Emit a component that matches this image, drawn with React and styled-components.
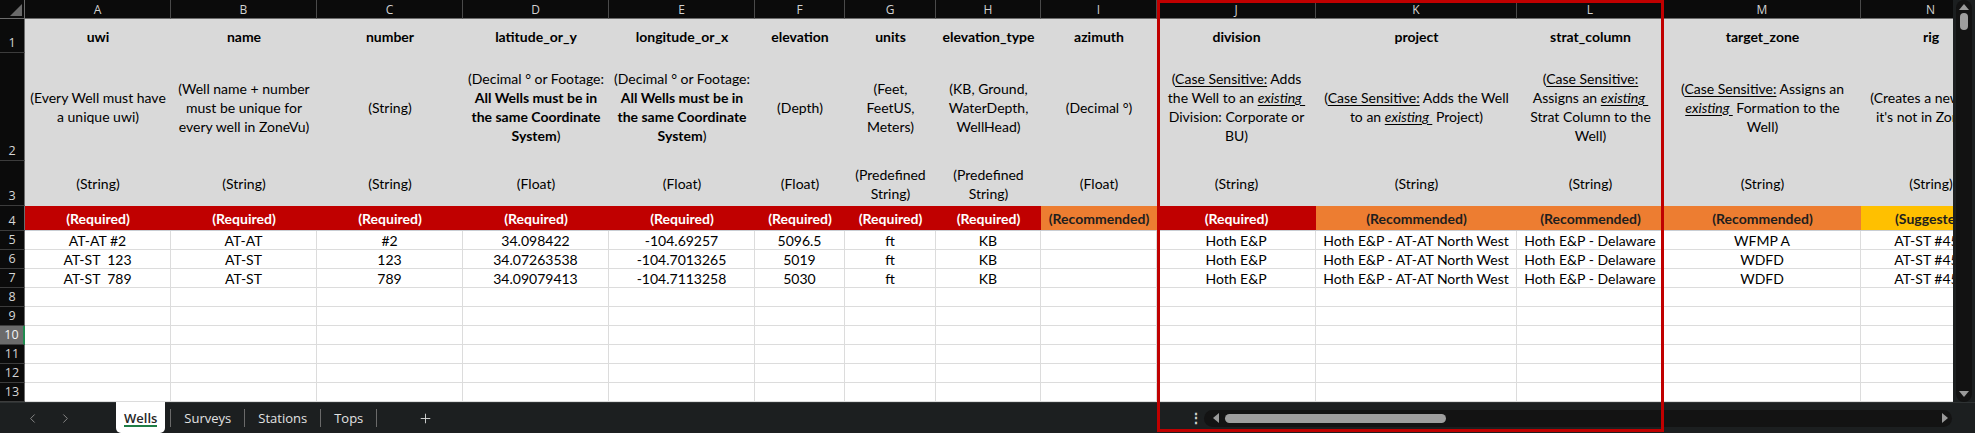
import styled, { createGlobalStyle, css } from "styled-components";
import { ChevronLeft, ChevronRight, Plus } from "lucide-react";

const GlobalStyle = createGlobalStyle`
  html, body {
    margin: 0;
    padding: 0;
    background: #1c1f20;
  }
  * {
    box-sizing: border-box;
  }
`;

const CELL_FONT = `"Lato", "Liberation Sans", sans-serif`;
const UI_FONT = `"Open Sans", "Noto Sans", sans-serif`;

const ROW_HEAD = 25;

const Window = styled.div`
  position: relative;
  width: 1975px;
  height: 433px;
  display: flex;
  flex-direction: column;
  overflow: hidden;
  background: #1c1f20;
`;

const Main = styled.div`
  display: flex;
  height: 402px;
`;

const Sheet = styled.div`
  flex: 1;
  overflow: hidden;
  display: grid;
  grid-template-columns: ${({ cols }) => `${ROW_HEAD}px ${cols.map(c => `${c}px`).join(" ")}`};
  grid-template-rows: 19px 34px 108px 45px 25px repeat(9, 19px);
  font-family: ${CELL_FONT};
  font-size: 14px;
  color: #000;
`;

const Corner = styled.div`
  background: #0b0b0b;
  border-right: 1px solid #6c6c6c;
  border-bottom: 1px solid #6c6c6c;
  position: relative;

  &::after {
    content: "";
    position: absolute;
    left: 10px;
    top: 4px;
    width: 12px;
    height: 12px;
    background: #6a6a6a;
    clip-path: polygon(100% 0, 100% 100%, 0 100%);
  }
`;

const ColHead = styled.div`
  display: flex;
  align-items: center;
  justify-content: center;
  background: #0b0b0b;
  color: #d2d2d2;
  font-family: ${UI_FONT};
  font-size: 12px;
  border-right: 1px solid #4a4a4a;
  border-bottom: 1px solid #6c6c6c;
`;

const RowHead = styled.div`
  display: flex;
  align-items: flex-end;
  justify-content: center;
  padding-bottom: 1px;
  background: #0b0b0b;
  color: #d6d6d6;
  font-family: ${UI_FONT};
  font-size: 12.5px;
  line-height: 17px;
  border-right: 1px solid #6c6c6c;
  border-bottom: 1px solid #3c3c3c;

  ${({ active }) =>
    active &&
    css`
      background: #6b6b6b;
      color: #f4f4f4;
      border-right: 2px solid #1e8c4e;
    `}
`;

const HeadCell = styled.div`
  display: flex;
  align-items: center;
  justify-content: center;
  text-align: center;
  white-space: pre;
  line-height: 19px;
  background: #d9d9d9;
  font-weight: ${({ bold }) => (bold ? 700 : 400)};
`;

const TAGS = {
  req: { bg: "#c00000", fg: "#ffffff", label: "(Required)" },
  rec: { bg: "#ed7d31", fg: "#1e1e1e", label: "(Recommended)" },
  sug: { bg: "#ffc000", fg: "#1e1e1e", label: "(Suggested)" },
};

const TagCell = styled.div`
  display: flex;
  align-items: center;
  justify-content: center;
  white-space: nowrap;
  font-weight: 700;
  background: ${({ kind }) => TAGS[kind].bg};
  color: ${({ kind }) => TAGS[kind].fg};
  border-bottom: 1px solid #c9ced4;
`;

const DataCell = styled.div`
  display: flex;
  align-items: center;
  justify-content: center;
  white-space: pre;
  background: #ffffff;
  border-right: 1px solid #dcdcdc;
  border-bottom: 1px solid #dcdcdc;
`;

const B = styled.b`
  font-weight: 700;
`;

const U = styled.span`
  text-decoration: underline;
  text-underline-offset: 2px;
`;

const Ex = styled.i`
  font-style: italic;
  text-decoration: underline;
  text-underline-offset: 2px;
`;

const VScroll = styled.div`
  width: 22px;
  padding: 0 3px;
  background: #1c1f20;
`;

const VTrack = styled.div`
  height: 100%;
  border-radius: 8px;
  background: #121212;
  display: flex;
  flex-direction: column;
  align-items: center;
  padding-top: 4px;
`;

const VThumb = styled.div`
  width: 8px;
  height: 17px;
  margin-top: 3px;
  border-radius: 4px;
  background: #9e9e9e;
`;

const Spacer = styled.div`
  flex: 1;
`;

const Arrow = styled.div`
  width: 0;
  height: 0;
  border: 5px solid transparent;
  ${({ dir }) =>
    ({
      up: css`
        border-bottom: 6px solid #9a9a9a;
        border-top-width: 0;
      `,
      down: css`
        border-top: 6px solid #9a9a9a;
        border-bottom-width: 0;
        margin-bottom: 5px;
      `,
      left: css`
        border-right: 6px solid #9a9a9a;
        border-left-width: 0;
      `,
      right: css`
        border-left: 6px solid #9a9a9a;
        border-right-width: 0;
      `,
    })[dir]}
`;

const BottomBar = styled.div`
  height: 31px;
  display: flex;
  align-items: stretch;
  border-top: 1px solid #2e3233;
  background: #1c1f20;
  font-family: ${UI_FONT};
  font-size: 13px;
  color: #e2e2e2;
`;

const Nav = styled.div`
  display: flex;
  align-items: center;
  gap: 18px;
  padding-left: 25px;
  width: 116px;
  color: #8c8c8c;
`;

const Tabs = styled.div`
  display: flex;
  align-items: center;
  width: 1072px;
`;

const Tab = styled.div`
  position: relative;
  display: flex;
  align-items: center;
  padding: 0 13px;
  height: 100%;

  ${({ active }) =>
    active &&
    css`
      margin-top: -1px;
      height: calc(100% + 1px);
      padding: 0 8px;
      margin-right: 5px;
      background: #ffffff;
      color: #262626;
      font-weight: 600;
      border-radius: 0 0 5px 5px;

      &::after {
        content: "";
        position: absolute;
        left: 8px;
        right: 8px;
        bottom: 6px;
        height: 2px;
        background: #1e7d45;
      }
    `}
`;

const Sep = styled.div`
  width: 1px;
  height: 18px;
  background: #6a6a6a;
`;

const AddSheet = styled.div`
  display: flex;
  align-items: center;
  margin-left: 41px;
  color: #d4d4d4;
`;

const More = styled.div`
  display: flex;
  align-items: center;
  justify-content: center;
  width: 16px;
  color: #cfcfcf;
  font-size: 14px;
  font-weight: 700;
  line-height: 1;
`;

const HTrack = styled.div`
  align-self: center;
  display: flex;
  align-items: center;
  gap: 6px;
  width: 748px;
  height: 17px;
  padding: 0 4px 0 9px;
  border-radius: 9px;
  background: #131313;
`;

const HThumb = styled.div`
  width: 221px;
  height: 9px;
  border-radius: 5px;
  background: #9e9e9e;
`;

const Focus = styled.div`
  position: absolute;
  left: 1157px;
  top: 0;
  width: 507px;
  height: 432px;
  border: 3px solid #c00000;
  pointer-events: none;
`;

const REQ = "req";
const REC = "rec";

const columns = [
  {
    id: "A",
    w: 146,
    title: "uwi",
    desc: (
      <>
        (Every Well must have
        <br />a unique uwi)
      </>
    ),
    type: "(String)",
    tag: REQ,
    rows: ["AT-AT #2", "AT-ST  123", "AT-ST  789"],
  },
  {
    id: "B",
    w: 146,
    title: "name",
    desc: (
      <>
        (Well name + number
        <br />
        must be unique for
        <br />
        every well in ZoneVu)
      </>
    ),
    type: "(String)",
    tag: REQ,
    rows: ["AT-AT", "AT-ST", "AT-ST"],
  },
  {
    id: "C",
    w: 146,
    title: "number",
    desc: "(String)",
    type: "(String)",
    tag: REQ,
    rows: ["#2", "123", "789"],
  },
  {
    id: "D",
    w: 146,
    title: "latitude_or_y",
    desc: (
      <>
        (Decimal ° or Footage:
        <br />
        <B>All Wells must be in</B>
        <br />
        <B>the same Coordinate</B>
        <br />
        <B>System</B>)
      </>
    ),
    type: "(Float)",
    tag: REQ,
    rows: ["34.098422", "34.07263538", "34.09079413"],
  },
  {
    id: "E",
    w: 146,
    title: "longitude_or_x",
    desc: (
      <>
        (Decimal ° or Footage:
        <br />
        <B>All Wells must be in</B>
        <br />
        <B>the same Coordinate</B>
        <br />
        <B>System</B>)
      </>
    ),
    type: "(Float)",
    tag: REQ,
    rows: ["-104.69257", "-104.7013265", "-104.7113258"],
  },
  {
    id: "F",
    w: 90,
    title: "elevation",
    desc: "(Depth)",
    type: "(Float)",
    tag: REQ,
    rows: ["5096.5", "5019", "5030"],
  },
  {
    id: "G",
    w: 91,
    title: "units",
    desc: (
      <>
        (Feet,
        <br />
        FeetUS,
        <br />
        Meters)
      </>
    ),
    type: (
      <>
        (Predefined
        <br />
        String)
      </>
    ),
    tag: REQ,
    rows: ["ft", "ft", "ft"],
  },
  {
    id: "H",
    w: 105,
    title: "elevation_type",
    desc: (
      <>
        (KB, Ground,
        <br />
        WaterDepth,
        <br />
        WellHead)
      </>
    ),
    type: (
      <>
        (Predefined
        <br />
        String)
      </>
    ),
    tag: REQ,
    rows: ["KB", "KB", "KB"],
  },
  {
    id: "I",
    w: 116,
    title: "azimuth",
    desc: "(Decimal °)",
    type: "(Float)",
    tag: REC,
    rows: ["", "", ""],
  },
  {
    id: "J",
    w: 159,
    title: "division",
    desc: (
      <>
        (<U>Case Sensitive:</U> Adds
        <br />
        the Well to an <Ex>existing </Ex>
        <br />
        Division: Corporate or
        <br />
        BU)
      </>
    ),
    type: "(String)",
    tag: REQ,
    rows: ["Hoth E&P", "Hoth E&P", "Hoth E&P"],
  },
  {
    id: "K",
    w: 201,
    title: "project",
    desc: (
      <>
        (<U>Case Sensitive:</U> Adds the Well
        <br />
        to an <Ex>existing </Ex>{" "}Project)
      </>
    ),
    type: "(String)",
    tag: REC,
    rows: [
      "Hoth E&P - AT-AT North West",
      "Hoth E&P - AT-AT North West",
      "Hoth E&P - AT-AT North West",
    ],
  },
  {
    id: "L",
    w: 147,
    title: "strat_column",
    desc: (
      <>
        (<U>Case Sensitive:</U>
        <br />
        Assigns an <Ex>existing </Ex>
        <br />
        Strat Column to the
        <br />
        Well)
      </>
    ),
    type: "(String)",
    tag: REC,
    rows: ["Hoth E&P - Delaware", "Hoth E&P - Delaware", "Hoth E&P - Delaware"],
  },
  {
    id: "M",
    w: 197,
    title: "target_zone",
    desc: (
      <>
        (<U>Case Sensitive:</U> Assigns an
        <br />
        <Ex>existing </Ex>{" "}Formation to the
        <br />
        Well)
      </>
    ),
    type: "(String)",
    tag: REC,
    rows: ["WFMP A", "WDFD", "WDFD"],
  },
  {
    id: "N",
    w: 140,
    title: "rig",
    desc: (
      <>
        (Creates a new rig if
        <br />
        it's not in ZoneVu)
      </>
    ),
    type: "(String)",
    tag: "sug",
    rows: ["AT-ST #456", "AT-ST #456", "AT-ST #456"],
  },
];

const EMPTY_ROWS = [8, 9, 10, 11, 12, 13];

const App = () => (
  <>
    <GlobalStyle />
    <Window>
      <Main>
        <Sheet cols={columns.map(c => c.w)}>
          <Corner />
          {columns.map(c => (
            <ColHead key={c.id}>{c.id}</ColHead>
          ))}

          <RowHead>1</RowHead>
          {columns.map(c => (
            <HeadCell bold key={c.id}>
              {c.title}
            </HeadCell>
          ))}

          <RowHead>2</RowHead>
          {columns.map(c => (
            <HeadCell key={c.id}>
              <div>{c.desc}</div>
            </HeadCell>
          ))}

          <RowHead>3</RowHead>
          {columns.map(c => (
            <HeadCell key={c.id}>
              <div>{c.type}</div>
            </HeadCell>
          ))}

          <RowHead>4</RowHead>
          {columns.map(c => (
            <TagCell kind={c.tag} key={c.id}>
              {TAGS[c.tag].label}
            </TagCell>
          ))}

          {[0, 1, 2].map(r => (
            <>
              <RowHead key={`h${r}`}>{r + 5}</RowHead>
              {columns.map(c => (
                <DataCell key={`${c.id}${r}`}>{c.rows[r]}</DataCell>
              ))}
            </>
          ))}

          {EMPTY_ROWS.map(n => (
            <>
              <RowHead key={`h${n}`} active={n === 10}>
                {n}
              </RowHead>
              {columns.map(c => (
                <DataCell key={`${c.id}${n}`} />
              ))}
            </>
          ))}
        </Sheet>

        <VScroll>
          <VTrack>
            <Arrow dir="up" />
            <VThumb />
            <Spacer />
            <Arrow dir="down" />
          </VTrack>
        </VScroll>
      </Main>

      <BottomBar>
        <Nav>
          <ChevronLeft size={15} strokeWidth={1.5} />
          <ChevronRight size={15} strokeWidth={1.5} />
        </Nav>
        <Tabs>
          <Tab active>Wells</Tab>
          <Sep />
          <Tab>Surveys</Tab>
          <Sep />
          <Tab>Stations</Tab>
          <Sep />
          <Tab>Tops</Tab>
          <Sep />
          <AddSheet>
            <Plus size={15} strokeWidth={1.5} />
          </AddSheet>
        </Tabs>
        <More>⋮</More>
        <HTrack>
          <Arrow dir="left" />
          <HThumb />
          <Spacer />
          <Arrow dir="right" />
        </HTrack>
      </BottomBar>

      <Focus />
    </Window>
  </>
);

export default App;
